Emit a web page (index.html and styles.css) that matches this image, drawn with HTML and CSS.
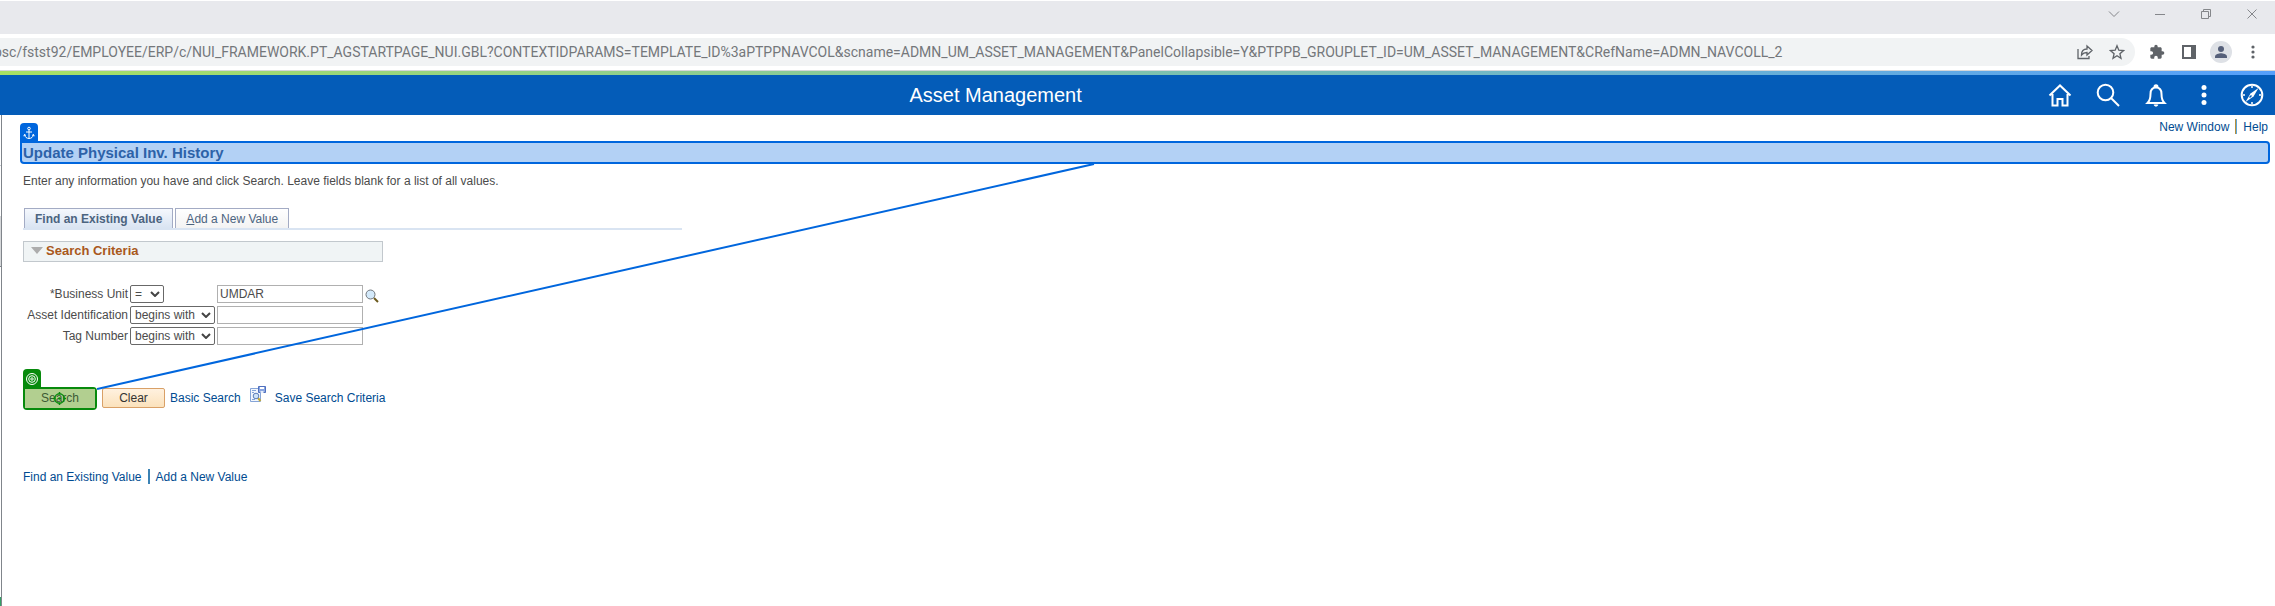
FILE: index.html
```html
<!DOCTYPE html>
<html lang="en">
<head>
<meta charset="utf-8">
<title>Asset Management</title>
<link rel="stylesheet" href="styles.css">
</head>
<body>
<header class="browser">
  <div class="window-bar">
    <button class="win-btn" aria-label="Tab search"><svg width="12" height="12" viewBox="0 0 12 12"><path d="M1 3.500l5 5 5-5"/></svg></button>
    <button class="win-btn" aria-label="Minimize"><svg width="12" height="12" viewBox="0 0 12 12"><path d="M1 6.500h10"/></svg></button>
    <button class="win-btn" aria-label="Restore"><svg width="12" height="12" viewBox="0 0 12 12"><path d="M1.500 3.500h7v7h-7zM3.500 3.500v-2h7v7h-2"/></svg></button>
    <button class="win-btn" aria-label="Close"><svg width="12" height="12" viewBox="0 0 12 12"><path d="M1.500 1.500l9 9m0-9l-9 9"/></svg></button>
  </div>
  <div class="toolbar">
    <div class="omnibox">
      <span class="url">psc/fstst92/EMPLOYEE/ERP/c/NUI_FRAMEWORK.PT_AGSTARTPAGE_NUI.GBL?CONTEXTIDPARAMS=TEMPLATE_ID%3aPTPPNAVCOL&amp;scname=ADMN_UM_ASSET_MANAGEMENT&amp;PanelCollapsible=Y&amp;PTPPB_GROUPLET_ID=UM_ASSET_MANAGEMENT&amp;CRefName=ADMN_NAVCOLL_2</span>
      <button class="tool-btn" aria-label="Share"><svg width="16" height="16" viewBox="0 0 16 16" class="thin"><path d="M1 5v9.500h11V12M4.500 11c0-4 2-6 5.500-6V2l5 4.500-5 4.500V8.500c-2.500 0-4 .5-5.500 2.500z"/></svg></button>
      <button class="tool-btn" aria-label="Bookmark"><svg width="16" height="16" viewBox="0 0 16 16" class="thin"><path d="M8 1.800l1.800 4.400 4.700.4-3.600 3.100 1.100 4.600-4-2.500-4 2.500 1.100-4.600-3.600-3.100 4.700-.4z"/></svg></button>
    </div>
    <div class="tools">
      <button class="tool-btn" aria-label="Extensions"><svg width="16" height="16" viewBox="0 0 24 24" class="solid"><path d="M20.500 11H19V7c0-1.100-.9-2-2-2h-4V3.500a2.500 2.500 0 0 0-5 0V5H4c-1.100 0-2 .9-2 2v3.800h1.500a2.700 2.700 0 0 1 0 5.400H2V20c0 1.100.9 2 2 2h3.800v-1.500a2.700 2.700 0 0 1 5.400 0V22H17c1.100 0 2-.9 2-2v-4h1.500a2.500 2.500 0 0 0 0-5z"/></svg></button>
      <button class="tool-btn" aria-label="Side panel"><svg width="14" height="14" viewBox="0 0 14 14" class="solid"><path fill-rule="evenodd" d="M0 0h14v14H0zM2 2v10h7V2z"/></svg></button>
      <button class="tool-btn avatar" aria-label="Profile"><svg width="14" height="14" viewBox="0 0 14 14"><circle cx="7" cy="4" r="3"/><path d="M1 13v-1.500C1 9 5 8.200 7 8.200s6 .8 6 3.300V13z"/></svg></button>
      <button class="tool-btn" aria-label="Browser menu"><svg width="16" height="16" viewBox="0 0 16 16" class="solid"><circle cx="8" cy="3" r="1.600"/><circle cx="8" cy="8" r="1.600"/><circle cx="8" cy="13" r="1.600"/></svg></button>
    </div>
  </div>
</header>

<div class="banner">
  <h1 class="banner-title">Asset Management</h1>
  <nav class="banner-nav" aria-label="Portal">
    <button class="nav-btn" aria-label="Home"><svg width="24" height="24" viewBox="0 0 24 24"><path d="M1.500 12.500L12 2.500l10.500 10M4.500 11v11.500h5V16h5v6.500h5V11"/></svg></button>
    <button class="nav-btn" aria-label="Search"><svg width="24" height="24" viewBox="0 0 24 24"><circle cx="9.500" cy="9.500" r="7.800"/><path d="M15 15l8 8"/></svg></button>
    <button class="nav-btn" aria-label="Notifications"><svg width="24" height="24" viewBox="0 0 24 24"><path d="M3.500 20h17c-2-2-3-4.500-3-9 0-4-2-6.500-5.500-6.500S6.500 7 6.500 11c0 4.500-1 7-3 9zM10.500 4c0-2.500 3-2.500 3 0M10.500 21.500c.5 1.500 2.500 1.500 3 0"/></svg></button>
    <button class="nav-btn" aria-label="Actions"><svg width="24" height="24" viewBox="0 0 24 24" class="dots"><circle cx="12" cy="4.500" r="2.500"/><circle cx="12" cy="12" r="2.500"/><circle cx="12" cy="19.500" r="2.500"/></svg></button>
    <button class="nav-btn" aria-label="NavBar"><svg width="24" height="24" viewBox="0 0 24 24"><circle cx="12" cy="12" r="10.300"/><path d="M12 3v2M12 19v2M3 12h2M19 12h2" stroke-width="1.500"/><path d="M18.500 5l-5 8.500L5.500 19l5-8.500z" stroke="none" fill="#fff"/><path d="M9.500 14.500l2-2" stroke="#045cb8" stroke-width="1.500"/></svg></button>
  </nav>
</div>

<div class="frame">
<div class="rail"></div>
<main class="page">
  <div class="page-links"><a href="#">New Window</a><i class="bar"></i><a href="#">Help</a></div>
  <div class="heading">
    <h2>Update Physical Inv. History</h2>
    <span class="badge anchor"><svg width="12" height="14" viewBox="0 0 12 14"><circle cx="6" cy="2.500" r="1.300"/><path d="M6 3.800V12.500M3 6h6M1.500 8.500c.3 2.500 2.200 4 4.500 4s4.200-1.500 4.500-4M.8 10.200l.7-1.700 1.500 1M11.200 10.200l-.7-1.700-1.500 1"/></svg></span>
  </div>
  <p class="intro">Enter any information you have and click Search. Leave fields blank for a list of all values.</p>

  <div class="tabs">
    <button class="tab active">Find an Existing Value</button>
    <button class="tab"><u>A</u>dd a New Value</button>
  </div>

  <button class="section"><i class="triangle"></i>Search Criteria</button>

  <form class="criteria">
    <label for="unit">*Business Unit</label>
    <span class="pick short"><select aria-label="Business Unit operator"><option>=</option></select><svg width="10" height="6" viewBox="0 0 10 6"><path d="M1 1l4 4 4-4"/></svg></span>
    <input id="unit" type="text" value="UMDAR">
    <button type="button" class="lookup" aria-label="Look up Business Unit"><svg width="14" height="14" viewBox="0 0 14 14"><path d="M9 9l4 4" stroke="#6b5a1c" stroke-width="2"/><circle cx="5.500" cy="5.500" r="4.500" fill="#d3e9fa" stroke="#70757c"/></svg></button>
    <label for="asset">Asset Identification</label>
    <span class="pick"><select aria-label="Asset Identification operator"><option>begins with</option></select><svg width="10" height="6" viewBox="0 0 10 6"><path d="M1 1l4 4 4-4"/></svg></span>
    <input id="asset" type="text"><span></span>
    <label for="tag">Tag Number</label>
    <span class="pick"><select aria-label="Tag Number operator"><option>begins with</option></select><svg width="10" height="6" viewBox="0 0 10 6"><path d="M1 1l4 4 4-4"/></svg></span>
    <input id="tag" type="text"><span></span>
  </form>

  <div class="actions">
    <div class="target">
      <button class="search">Search</button>
      <span class="badge goal"><svg width="14" height="14" viewBox="0 0 14 14"><circle cx="7" cy="7" r="5.500"/><circle cx="7" cy="7" r="3.300"/><circle cx="7" cy="7" r="1.200"/></svg></span>
      <svg class="cross" width="15" height="15" viewBox="0 0 15 15"><circle cx="7.500" cy="7.500" r="4.700"/><path d="M7.500 1v2.500M7.500 11.500V14M1 7.500h2.500M11.500 7.500H14"/><circle cx="7.500" cy="7.500" r="1.300" class="dot"/></svg>
    </div>
    <button class="clear">Clear</button>
    <a href="#" class="basic">Basic Search</a>
    <svg class="save-icon" width="16" height="16" viewBox="0 0 16 16"><path d="M.5 2.500h10v13H.5z" fill="#f3f7fd" stroke="#86a5d8"/><path d="M2 4.500h4M2 6.500h2M2 13.500h3" stroke="#86a5d8"/><path d="M8 12l2.500 3" stroke="#c2a832" stroke-width="2"/><circle cx="6" cy="10" r="2.800" fill="#cfe3f8" stroke="#5c7db8"/><path d="M8.500.5h7v6h-7z" fill="#89a5e0" stroke="#4f6fbe"/><path d="M10 1h4v2h-4z" fill="#fff"/><path d="M10.500 5h3v2h-3z" fill="#e5edfb"/></svg>
    <a href="#">Save Search Criteria</a>
  </div>

  <div class="foot-links"><a href="#">Find an Existing Value</a><i class="bar"></i><a href="#">Add a New Value</a></div>
  <svg class="link-line" width="1000" height="230" viewBox="0 0 1000 230"><path d="M0 226L997 1"/></svg>
</main>
</div>
</body>
</html>
```

FILE: styles.css
```css
* { box-sizing: border-box; }
body {
  margin: 0;
  min-height: 100vh;
  display: flex;
  flex-direction: column;
  background: #fff;
  color: #4b4b4b;
  font: 12px/14px "Liberation Sans", Arial, sans-serif;
}
button { font: inherit; color: inherit; padding: 0; border: 0; background: none; }
svg { display: block; fill: none; }
a { color: #004b91; text-decoration: none; }

.window-bar {
  height: 34px;
  border-top: 1px solid #fff;
  background: #e8e9ed;
  display: flex;
  justify-content: flex-end;
  align-items: flex-start;
}
.win-btn { width: 46px; height: 26px; display: grid; place-items: center; }
.win-btn svg { stroke: #85878b; }
.toolbar {
  height: 37px;
  padding: 4px 6px 4px 0;
  border-bottom: 1px solid #d5d7da;
  display: flex;
  align-items: center;
  justify-content: space-between;
}
.omnibox {
  flex: 1;
  height: 28px;
  padding-right: 2px;
  border-radius: 0 14px 14px 0;
  background: #f1f3f4;
  display: flex;
  align-items: center;
}
.url {
  flex: 1;
  margin-left: -6px;
  color: #74777b;
  font: 14px/20px Roboto, "Open Sans", sans-serif;
  white-space: nowrap;
}
.tools { display: flex; padding-left: 6px; }
.tool-btn { width: 32px; height: 22px; display: grid; place-items: center; }
.thin { stroke: #5f6368; stroke-width: 1.3; }
.solid { fill: #5f6368; }
.avatar { width: 22px; margin: 0 5px; border-radius: 50%; background: #dee1e6; }
.avatar svg { fill: #56607a; }

.banner {
  height: 44px;
  padding-right: 11px;
  border-top: 4px solid;
  border-image: linear-gradient(90deg, #a8e063, #7abfb5 55%, #559ffb) 1;
  background: #045cb8;
  color: #fff;
  display: grid;
  grid-template-columns: 10fr auto 13fr;
  align-items: center;
}
.banner-title { grid-column: 2; margin: 0; font-size: 20px; line-height: 24px; font-weight: 400; }
.banner-nav { justify-self: end; display: flex; gap: 24px; }
.nav-btn { width: 24px; height: 24px; }
.nav-btn svg { stroke: #fff; stroke-width: 2; }
.nav-btn .dots { fill: #fff; stroke: none; }

.frame { flex: 1; display: flex; }
.rail {
  width: 1px;
  background: linear-gradient(#fff 50px, #c8ccd0 50px 51px, #fff 51px 101px, #d6d8da 101px 151px, #80858b 151px 152px, #fff 152px calc(100% - 9px), #34a065 calc(100% - 9px));
}
.page {
  position: relative;
  flex: 1;
  padding: 4px 5px 0 21px;
  border-left: 1px solid #80858b;
}
.page-links, .foot-links { display: flex; align-items: center; gap: 6px; }
.page-links { justify-content: flex-end; padding-right: 2px; }
.bar { width: 2px; height: 15px; background: #3b83b5; }
.page-links .bar { background: #5fa5d8; border-left: 1px solid #b8903c; }

.heading {
  position: relative;
  margin: 7px 0 0 -3px;
  height: 23px;
  border: 2px solid #0066dd;
  border-radius: 0 4px 4px 4px;
  background: #b3d1f5;
}
.heading h2 { margin: 0 0 0 1px; font-size: 15px; line-height: 20px; color: #2d62a8; }
.badge { position: absolute; left: -2px; bottom: 100%; width: 18px; height: 20px; display: grid; place-items: center; border-radius: 4px 4px 0 0; }
.badge svg { stroke: #fff; }
.anchor { background: #0066dd; }
.goal { background: #078a0c; }
.intro { margin: 10px 0 20px; }

.tabs { width: 659px; padding-left: 1px; border-bottom: 2px solid #d9e4f2; display: flex; gap: 2px; }
.tab { height: 20px; padding: 0 10px; border: 1px solid #a3abc4; border-bottom: 0; color: #4c6480; background: linear-gradient(#fff, #f3f3f3); }
.tab.active { font-weight: 700; background: linear-gradient(#f5f8fd, #d9e4f2); }
.section {
  width: 360px;
  height: 21px;
  margin: 11px 0 23px;
  padding: 0 0 2px 7px;
  border: 1px solid #c2c8cd;
  background: #f0f4f5;
  color: #a9581c;
  font-weight: 700;
  font-size: 13px;
  display: flex;
  align-items: center;
  gap: 3px;
}
.triangle { border: 6px solid transparent; border-top: 7px solid #adadad; border-bottom: 0; }

.criteria { display: grid; grid-template-columns: 105px 85px 146px 14px; column-gap: 2px; row-gap: 3px; align-items: center; }
.criteria label { text-align: right; white-space: nowrap; }
.pick { position: relative; height: 18px; }
.pick select {
  display: block;
  width: 100%;
  height: 18px;
  padding: 0 4px;
  border: 1px solid #686868;
  border-radius: 2px;
  background: #fff;
  color: inherit;
  font: inherit;
  appearance: none;
}
.pick svg { position: absolute; right: 4px; top: 6px; stroke: #444; stroke-width: 2; }
.short { width: 34px; }
.criteria input { width: 100%; height: 18px; padding: 0 2px; border: 1px solid #b0b0b0; color: inherit; font: inherit; }
.lookup { align-self: end; }

.actions { margin-top: 41px; display: flex; align-items: center; }
.target { position: relative; width: 74px; height: 23px; margin-right: 5px; border: 2px solid #078a0c; border-radius: 0 4px 4px 4px; }
.search { display: block; width: 100%; height: 100%; background: #b2cf90; color: #3d5a35; }
.cross { position: absolute; left: 27px; top: 2px; stroke: #078a0c; stroke-width: 1.5; }
.cross .dot { fill: #078a0c; stroke: none; }
.clear { width: 63px; height: 20px; margin-right: 5px; border: 1px solid #d9a067; border-radius: 2px; background: linear-gradient(#fff1df, #fbe2bc); color: #333; }
.basic { margin-right: 9px; }
.save-icon { margin: 0 9px 8px 0; }
.foot-links { margin-top: 59px; }
.link-line { position: absolute; left: 95px; top: 48px; stroke: #0066dd; stroke-width: 2; pointer-events: none; }
```
